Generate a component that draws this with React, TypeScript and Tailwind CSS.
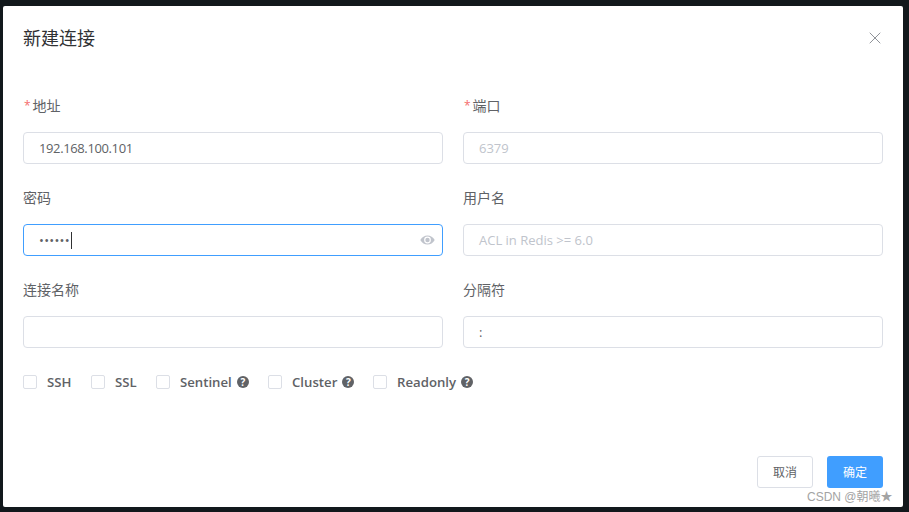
import { X } from 'lucide-react';

const FONT = "font-['Open_Sans','Noto_Sans_CJK_SC',sans-serif]";

interface FieldProps {
  label: string;
  required?: boolean;
  value?: string;
  placeholder?: string;
  focused?: boolean;
  children?: React.ReactNode;
}

function Field({ label, required, value, placeholder, focused, children }: FieldProps) {
  return (
    <div className="w-[420px]">
      <div className="h-[20px] flex items-center text-[14px] leading-[20px] text-[#606266]">
        {required && <span className="text-[#f56c6c] text-[12px] ml-[1px] mr-[2px]">*</span>}
        {label}
      </div>
      <div
        className={`mt-[16px] h-[32px] rounded-[4px] border flex items-center pl-[15px] pr-[7px] text-[13px] ${
          focused ? 'border-[#409eff]' : 'border-[#dcdfe6]'
        }`}
      >
        {value && <span className="pt-[2px] tracking-[-0.38px] text-[#606266]">{value}</span>}
        {placeholder && <span className="pt-[2px] text-[#c0c4cc]">{placeholder}</span>}
        {children}
      </div>
    </div>
  );
}

function Check({ label, help, className }: { label: string; help?: boolean; className: string }) {
  return (
    <div className={`flex items-center ${className}`}>
      <span className="w-[14px] h-[14px] rounded-[2px] border border-[#dcdfe6] bg-white" />
      <span className="ml-[10px] pt-[1px] text-[13.2px] font-semibold text-[#606266]">{label}</span>
      {help && (
        <span className="ml-[5px] w-[12px] h-[12px] rounded-full bg-[#606266] text-white text-[10px] font-bold leading-none flex items-center justify-center">
          ?
        </span>
      )}
    </div>
  );
}

function EyeIcon() {
  return (
    <svg width="15" height="10" viewBox="0 0 15 10" className="ml-auto">
      <path d="M0.3 5C2 2 4.5 0.4 7.5 0.4S13 2 14.7 5C13 8 10.5 9.6 7.5 9.6S2 8 0.3 5Z" fill="#c0c4cc" />
      <circle cx="7.5" cy="5" r="3.4" fill="#ffffff" />
      <circle cx="7.5" cy="5" r="2.2" fill="#c0c4cc" />
    </svg>
  );
}

export default function App() {
  return (
    <div className={`${FONT} w-[909px] h-[512px] bg-[#12181c] pt-[6px] pl-[3px] overflow-hidden relative`}>
      <div className="w-[900px] h-[501px] bg-white rounded-[2px] flex flex-col pl-[20px] pr-[20px]">
        {/* Header */}
        <div className="flex items-center justify-between h-[20px] mt-[22px]">
          <h3 className="text-[18px] leading-[24px] text-[#303133]">新建连接</h3>
          <X size={20} strokeWidth={1.2} className="text-[#909399] -mr-[2px]" />
        </div>

        {/* Form */}
        <div className="mt-[48px] grid grid-cols-[420px_420px] gap-x-[20px] gap-y-[24px]">
          <Field label="地址" required value="192.168.100.101" />
          <Field label="端口" required placeholder="6379" />
          <Field label="密码" focused>
            <span className="text-[#606266] text-[13px] tracking-[0.25px] leading-none">••••••</span>
            <span className="w-px h-[17px] bg-[#303133] ml-[1px]" />
            <EyeIcon />
          </Field>
          <Field label="用户名" placeholder="ACL in Redis >= 6.0" />
          <Field label="连接名称" />
          <Field label="分隔符" value=":" />
        </div>

        {/* Options */}
        <div className="mt-[27px] flex items-center h-[14px]">
          <Check label="SSH" className="w-[68px]" />
          <Check label="SSL" className="w-[65px]" />
          <Check label="Sentinel" help className="w-[112px]" />
          <Check label="Cluster" help className="w-[105px]" />
          <Check label="Readonly" help className="w-[110px]" />
        </div>

        {/* Footer */}
        <div className="mt-auto mb-[19px] flex justify-end gap-[14px]">
          <button className="w-[56px] h-[32px] pt-[1px] rounded-[3px] border border-[#dcdfe6] bg-white text-[12px] text-[#606266]">
            取消
          </button>
          <button className="w-[56px] h-[32px] pt-[1px] rounded-[3px] bg-[#409eff] text-[12px] text-white">确定</button>
        </div>
      </div>

      {/* Watermark */}
      <div className="absolute left-[807px] top-[489px] text-[12px] leading-[16px] text-[#a3a3a3] font-['Liberation_Sans','Noto_Sans_CJK_SC',sans-serif] whitespace-nowrap">
        CSDN @朝曦★
      </div>
    </div>
  );
}
